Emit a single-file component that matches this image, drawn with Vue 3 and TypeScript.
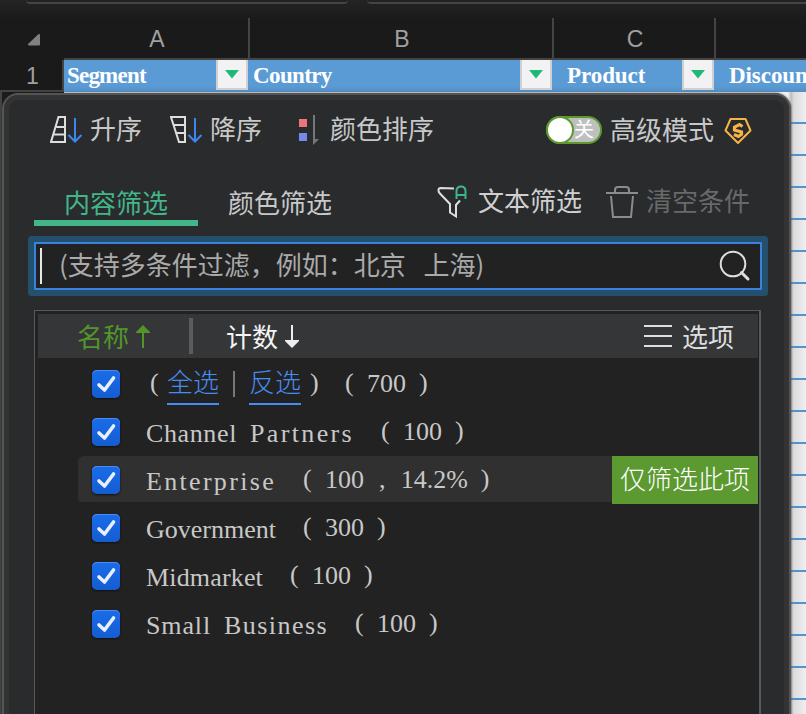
<script setup lang="ts">
interface Column { letter: string; title: string; width: number; indent: number; filter: boolean }
interface Item { label: string; count: string; active?: boolean }

const columns: Column[] = [
  { letter: 'A', title: 'Segment', width: 186, indent: 3, filter: true },
  { letter: 'B', title: 'Country', width: 304, indent: 3, filter: true },
  { letter: 'C', title: 'Product', width: 162, indent: 13, filter: true },
  { letter: '', title: 'Discoun', width: 90, indent: 13, filter: false },
]

const items: Item[] = [
  { label: 'Channel Partners', count: '100' },
  { label: 'Enterprise', count: '100 , 14.2%', active: true },
  { label: 'Government', count: '300' },
  { label: 'Midmarket', count: '100' },
  { label: 'Small Business', count: '100' },
]

// Advance widths (em) used to spread words over half-width cells.
const regular: Record<string, number> = {
  C: .667, P: .556, E: .611, G: .722, M: .889, S: .556, B: .667,
  a: .444, d: .5, e: .444, h: .5, i: .278, k: .5, l: .278, m: .778, n: .5,
  o: .5, p: .5, r: .333, s: .389, t: .278, u: .5, v: .5,
}
const bold: Record<string, number> = {
  S: .556, C: .722, P: .611, D: .722, c: .444, d: .556, e: .444, g: .5, i: .278,
  m: .833, n: .556, o: .5, r: .444, s: .389, t: .333, u: .556, y: .5,
}

function spacing(word: string, table: Record<string, number>, size: number, cell: number): string {
  const natural = [...word].reduce((sum, ch) => sum + (table[ch] ?? .5) * size, 0)
  return ((cell * word.length - natural) / word.length).toFixed(3) + 'px'
}
</script>

<template>
  <div class="screen">
    <div class="topbar"><i class="box first"></i><i class="box second"></i></div>
    <div class="sheet-head">
      <div class="corner">
        <svg width="14" height="14" viewBox="0 0 14 14"><path d="M12 2v9.500H2z" fill="#808080" stroke="#808080" stroke-width="2" stroke-linejoin="round" /></svg>
      </div>
      <div v-for="c in columns" :key="c.title" class="letter" :style="{ width: c.width + 'px' }">{{ c.letter }}</div>
    </div>
    <div class="sheet-row">
      <div class="row-no">1</div>
      <div v-for="c in columns" :key="c.title" class="cell" :style="{ width: c.width + 'px', paddingLeft: c.indent + 'px' }">
        <span class="title" :style="{ letterSpacing: spacing(c.title, bold, 23, 11.25) }">{{ c.title }}</span>
        <span v-if="c.filter" class="drop"><svg width="14" height="9" viewBox="0 0 14 9"><path d="M0 0h14L7 8.500z" fill="#20b878" /></svg></span>
      </div>
    </div>
    <div class="sheet-body"><div class="gutter"></div><div class="lines"></div></div>

    <section class="panel">
      <div class="tools">
        <div class="tool asc">
          <svg width="33" height="30" viewBox="0 0 33 30" fill="none">
            <path d="M8.500 2H15v25H1zM6.500 12H15M4 19.500h11" stroke="#dedede" stroke-width="2" />
            <path d="M25 3v23M18.500 20l6.500 6.500 6.500-6.500" stroke="#3d86f2" stroke-width="2" />
          </svg><span>升序</span>
        </div>
        <div class="tool desc">
          <svg width="33" height="30" viewBox="0 0 33 30" fill="none">
            <path d="M1 2h14v25H9zM3.500 10H15M6 18h9" stroke="#dedede" stroke-width="2" />
            <path d="M25 3v23M18.500 20l6.500 6.500 6.500-6.500" stroke="#3d86f2" stroke-width="2" />
          </svg><span>降序</span>
        </div>
        <div class="tool hue">
          <svg width="22" height="32" viewBox="0 0 22 32">
            <path d="M1 5h8v8H1z" fill="#ec7676" /><path d="M1 19h8v8H1z" fill="#7688ec" />
            <path d="M15 1h2v24h4l-6 6z" fill="#76777a" />
          </svg><span>颜色排序</span>
        </div>
        <div class="advanced">
          <span class="toggle"><i></i><b>关</b></span>
          <span>高级模式</span>
          <svg width="28" height="28" viewBox="0 0 28 28" fill="none">
            <path d="M6.500 2h15l5 11.500L14 26 1.500 13.500z" stroke="#f5b34a" stroke-width="2" stroke-linejoin="round" />
            <path d="M18.500 9.500L15.500 7.500l-5 2.700v2.800l7 2v2.300l-3 2.200-4.500-2" stroke="#f5b34a" stroke-width="3.200" />
          </svg>
        </div>
      </div>

      <div class="tabs">
        <div class="tab active">内容筛选</div>
        <div class="tab">颜色筛选</div>
        <div class="action text">
          <svg width="30" height="34" viewBox="0 0 30 34" fill="none">
            <path d="M17 3.500L3.500 3C1 3 1 6 2.500 8L13 19v8.500l6 4V20l4-4.500" stroke="#dedede" stroke-width="2" />
            <path d="M19.500 14V6q0-4.500 4.500-4.500T28.500 6v8M19.500 10h9" stroke="#3db489" stroke-width="2" />
          </svg><span>文本筛选</span>
        </div>
        <div class="action clear">
          <svg width="32" height="34" viewBox="0 0 32 34" fill="none" stroke="#8b8c8d" stroke-width="2">
            <path d="M0 8h32M9 8V5q0-3 3-3h8q3 0 3 3v3M5 11l2 21h18l2-21" />
          </svg><span>清空条件</span>
        </div>
      </div>

      <div class="search">
        <i class="caret"></i>
        <span class="hint">(支持多条件过滤，例如：北京 上海)</span>
        <svg width="32" height="32" viewBox="0 0 32 32" fill="none" stroke="#dedede">
          <circle cx="14" cy="14" r="12.300" stroke-width="2" /><path d="M22.500 22.500l6.500 6.500" stroke-width="3" stroke-linecap="round" />
        </svg>
      </div>

      <div class="list">
        <div class="list-head">
          <div class="name">名称<svg width="14" height="23" viewBox="0 0 14 23"><path d="M7 0L14 7v1H8v15H6V8H0V7z" fill="#52962b" /></svg></div>
          <i class="bar"></i>
          <div class="num">计数<svg width="14" height="23" viewBox="0 0 14 23"><path d="M6 0h2v15h6v1l-7 7-7-7v-1h6z" fill="#eee" /></svg></div>
          <div class="options">
            <svg width="28" height="24" viewBox="0 0 28 24"><path d="M0 2h28M0 12h28M0 22h28" stroke="#dedede" stroke-width="2" /></svg>选项
          </div>
        </div>

        <div class="row all">
          <span class="check"><svg width="28" height="28" viewBox="0 0 28 28"><path d="M7 15l5.500 5L21.500 8" /></svg></span>
          <span class="paren lead">(</span><a>全选</a><i class="sep"></i><a>反选</a><span class="paren tail">)</span>
          <span class="count"><span class="paren open">(</span><span class="digits">700</span><span class="paren close">)</span></span>
        </div>
        <div v-for="it in items" :key="it.label" class="row" :class="{ hovered: it.active }">
          <span class="check"><svg width="28" height="28" viewBox="0 0 28 28"><path d="M7 15l5.500 5L21.500 8" /></svg></span>
          <span class="label"><span v-for="w in it.label.split(' ')" :key="w" class="word" :style="{ letterSpacing: spacing(w, regular, 26, 13) }">{{ w }}</span></span>
          <span class="count"><span class="paren open">(</span><span class="digits">{{ it.count }}</span><span class="paren close">)</span></span>
          <button v-if="it.active">仅筛选此项</button>
        </div>
      </div>
    </section>
  </div>
</template>

<style>
body { margin: 0; background: #1a1a1a; }
</style>

<style scoped>
* { box-sizing: border-box; }
.screen { position: relative; width: 806px; height: 714px; overflow: hidden; background: #1a1a1a; color: #c8c8c8; font: 26px/32px "Noto Sans CJK SC", sans-serif; display: flex; flex-direction: column; }
svg { display: block; flex: none; }
.topbar { height: 18px; flex: none; display: flex; gap: 19px; padding-left: 26px; background: linear-gradient(#242424, #1b1b1b); }
.box { height: 4px; border-bottom: 2px solid #444; background: #222; flex: none; }
.first { width: 322px; border-radius: 0 0 8px 8px; }
.second { width: 460px; border-radius: 0 0 0 8px; }
.sheet-head { height: 42px; flex: none; display: flex; }
.corner { width: 64px; flex: none; padding: 19px 0 0 27px; }
.corner svg { margin-top: -4px; }
.letter { flex: none; text-align: center; padding-left: 2px; font: 23px/43px "Liberation Sans", sans-serif; color: #a0a0a0; border-right: 2px solid #444; border-bottom: 2px solid #444; }
.letter:last-child { border-right: 0; }
.sheet-row { height: 32px; flex: none; display: flex; }
.row-no { width: 64px; flex: none; padding-left: 26px; font: 23px/33px "Liberation Sans", sans-serif; color: #a0a0a0; border-right: 2px solid #444; border-bottom: 2px solid #444; }
.cell { flex: none; display: flex; justify-content: space-between; background: linear-gradient(#5b9bd5 80%, #538fc6); padding-right: 2px; }
.cell:last-child { padding-right: 0; }
.title { font: bold 23px/31px "Liberation Serif", serif; color: #fff; }
.drop { width: 32px; height: 30px; display: flex; align-items: center; justify-content: center; background: #f2f2f4; border: 2px solid #d0d0d2; border-top: 0; }
.sheet-body { flex: 1; display: flex; justify-content: space-between; }
.gutter { width: 8px; border-left: 2px solid #444; background: #1c1c1c; }
.lines { width: 742px; background: linear-gradient(90deg, #f0f0f0 724px, #bdbdbd 727px, #dcdcdc 730px, #efefef 742px); }
.lines::after { content: ""; display: block; height: 100%; background: repeating-linear-gradient(transparent 0 30px, #5592cb 30px 32px); }

.panel { position: absolute; left: 2px; top: 93px; width: 789px; height: 680px; background: #292b2d; border: 2px solid #555; border-radius: 16px 16px 0 0; box-shadow: inset 0 0 0 5px #333, 0 0 2px #222; display: flex; flex-direction: column; }
.panel > * { flex: none; }
.tools { height: 74px; margin-top: 5px; padding: 12px 0 0 46px; display: flex; }
.tool { display: flex; height: 36px; align-items: center; }
.tool span { position: relative; top: -2px; }
.asc, .desc { width: 120px; gap: 7px; }
.hue { padding-left: 8px; gap: 10px; }
.hue svg { margin-top: -1px; }
.advanced { display: flex; align-items: center; height: 36px; margin-left: 112px; }
.advanced > span + span { position: relative; top: -1px; }
.advanced > svg { margin: 2px 0 0 10px; }
.toggle { width: 56px; height: 28px; border-radius: 14px; margin-right: 8px; display: flex; align-items: center; background: #bfbfbf; border: 2px solid #5c9a31; }
.toggle i { width: 24px; height: 24px; border-radius: 50%; background: #fff; box-shadow: 0 0 0 2px #5c9a31; }
.toggle b { font-weight: 400; font-size: 20px; line-height: 24px; color: #fff; margin-left: 2px; position: relative; top: -1px; }
.tabs { height: 62px; padding-left: 30px; display: flex; }
.tab { width: 164px; height: 52px; padding-top: 12px; text-align: center; }
.tab.active { color: #42b589; border-bottom: 6px solid #42b589; }
.action { display: flex; height: 36px; align-items: center; margin-top: 10px; }
.action span { position: relative; top: -2px; }
.text { margin-left: 75px; gap: 11px; color: #d0d0d0; }
.clear { margin-left: 24px; gap: 8px; color: #68696b; }
.search { margin: 6px 0 0 30px; width: 728px; height: 48px; background: #222; border: 2px solid #3a83dd; box-shadow: 0 0 0 6px #24506d; border-radius: 1px; display: flex; align-items: center; padding: 0 9px 0 4px; }
.caret { width: 2px; height: 36px; background: #e8e8e8; }
.hint { margin-left: 17px; flex: 1; color: #aaa; word-spacing: 12px; white-space: nowrap; position: relative; top: -2px; }
.list { margin: 20px 0 0 30px; width: 727px; height: 440px; background: #222; border: 1px solid #56585a; border-right-width: 2px; padding: 3px 1px 0 3px; }
.list-head { height: 44px; background: #353638; display: flex; align-items: center; padding: 0 24px 0 39px; margin-bottom: 2px; }
.name, .num { display: flex; align-items: center; gap: 7px; color: #52962b; }
.num { color: #f4f4f4; margin-left: 33px; }
.bar { width: 4px; height: 36px; background: #5a5c5e; margin-left: 39px; }
.options { margin-left: auto; display: flex; align-items: center; gap: 10px; color: #dedede; }
.row { height: 48px; display: flex; align-items: center; padding-left: 54px; color: #c8c8c8; }
.check { width: 28px; height: 28px; flex: none; border-radius: 5px; background: linear-gradient(#1a6cec, #155cd0); box-shadow: inset 0 1px #4d8df0, 0 1px 2px #111; }
.check path { fill: none; stroke: #e8f0ff; stroke-width: 3.6; stroke-linecap: round; stroke-linejoin: round; }
.label { margin-left: 26px; display: flex; gap: 13px; font-family: "Liberation Serif", serif; position: relative; top: 2px; }
.word { white-space: nowrap; }
.count { display: flex; font-family: "Liberation Serif", serif; }
.paren { font-family: "Liberation Serif", serif; position: relative; top: -1px; }
.open { width: 22px; margin-left: 27px; }
.close { margin-left: 13px; }
.digits { word-spacing: 8.6px; white-space: pre; letter-spacing: 0; }
.all .open { width: 22px; margin-left: 26px; }
.lead { width: 16px; margin-left: 31px; flex: none; position: relative; left: -1px; }
a { color: #478cf0; height: 42px; padding-top: 2px; border-bottom: 2px solid #478cf0; font-weight: 300; }
.sep { width: 2px; height: 26px; background: #777; margin: 0 14px; }
.tail { width: 18px; padding-left: 9px; flex: none; }
.hovered { padding-left: 14px; margin-left: 40px; background: linear-gradient(#303030 0 0) 0 0 / 100% 46px no-repeat; border-radius: 6px 0 0 6px; }
button { margin-left: auto; width: 146px; height: 48px; border: 0; padding: 0 0 4px; background: #5c9a31; color: #fff; font: 300 26px/44px "Noto Sans CJK SC", sans-serif; }
</style>
